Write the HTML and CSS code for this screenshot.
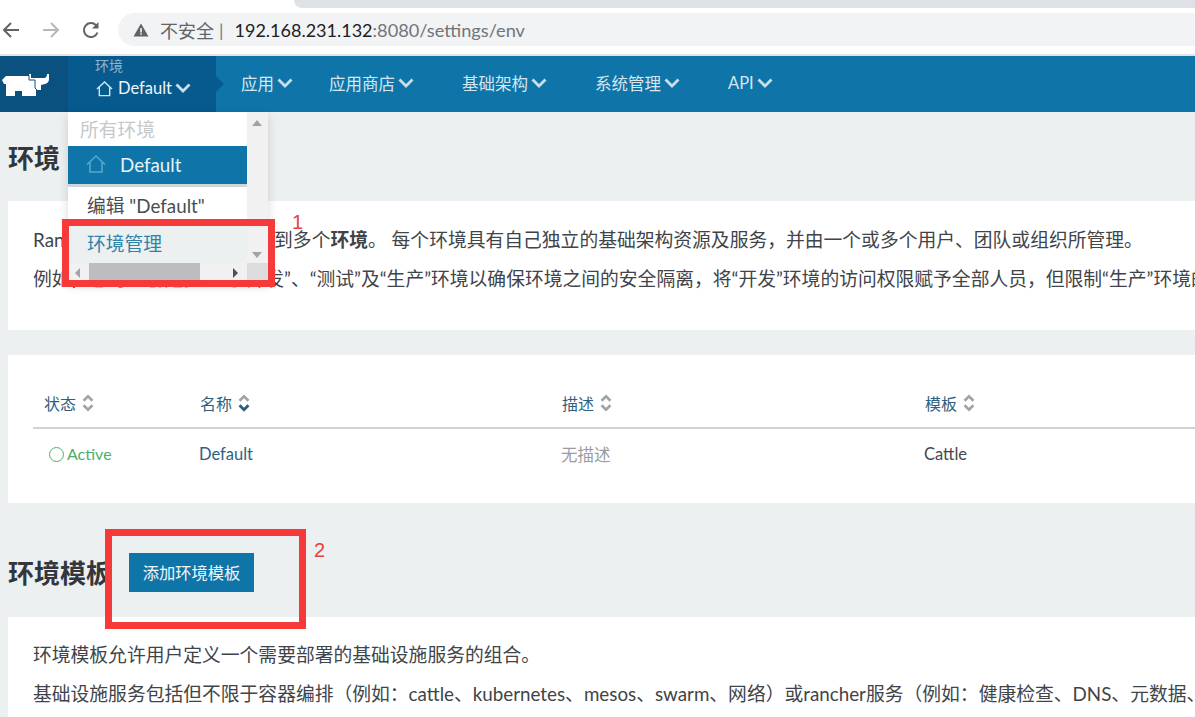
FILE: index.html
```html
<!DOCTYPE html>
<html lang="zh">
<head>
    <meta charset="utf-8">
    <title>环境</title>
    <link rel="stylesheet" href="styles.css">
</head>
<body>
    <!-- browser chrome -->
    <div class="tabstrip"><div class="tabrest"></div></div>
    <div class="toolbar">
        <svg class="tool" viewBox="0 0 20 20"><path d="M18 10H3M10 3l-7 7 7 7" fill="none" stroke="#5f6368" stroke-width="2"/></svg>
        <svg class="tool forward" viewBox="0 0 20 20"><path d="M2 10h15M10 3l7 7-7 7" fill="none" stroke="#b5b8bc" stroke-width="2"/></svg>
        <svg class="tool reload" viewBox="0 0 20 20"><path d="M16.5 12.5A7 7 0 1 1 15 5.2" fill="none" stroke="#5f6368" stroke-width="2"/><path d="M17.5 2v6.5H11z" fill="#5f6368"/></svg>
        <div class="omnibox">
            <svg class="warn" viewBox="0 0 16 16"><path d="M8 1.500 15.500 14.500H.5z" fill="#5f6368"/><path d="M7.200 6h1.600v4.500H7.200zM7.200 11.300h1.600v1.500H7.200z" fill="#f1f3f4"/></svg>
            <span class="insecure">不安全</span><span class="bar">|</span>
            <span class="host">192.168.231.132</span><span class="path">:8080/settings/env</span>
        </div>
    </div>

    <!-- app nav -->
    <div class="nav">
        <div class="logo">
            <svg viewBox="0 0 60 36" width="60" height="36"><path d="M2 14 6 10H29V8H31V12H44Q47 12 47 8H49V13Q49 17 45 18L41 19V24H36V30H22V25H15V30H6V18H4Z" fill="#fff"/><path d="M29 9V14H35V22L37 24" fill="none" stroke="#0a5180" stroke-width="1"/></svg>
        </div>
        <div class="envtab">
            <div class="envlabel">环境</div>
            <div class="envname">
                <svg class="house" viewBox="0 0 18 18"><path d="M1 9.500 9 2l8 7.500M3.500 7.500V16.500h11V7.500" fill="none" stroke="#cfe6f3" stroke-width="1.500"/></svg>
                Default
                <svg class="chev" viewBox="0 0 16 10"><path d="M1.500 1.500 8 8l6.500-6.500" fill="none" stroke="#c9dfec" stroke-width="2.800"/></svg>
            </div>
            <div class="envarrow"></div>
        </div>
        <div class="navitem first">应用<svg class="chev" viewBox="0 0 16 10"><path d="M1.500 1.500 8 8l6.500-6.500" fill="none" stroke="#c9dfec" stroke-width="2.800"/></svg></div>
        <div class="navitem second">应用商店<svg class="chev" viewBox="0 0 16 10"><path d="M1.500 1.500 8 8l6.500-6.500" fill="none" stroke="#c9dfec" stroke-width="2.800"/></svg></div>
        <div class="navitem">基础架构<svg class="chev" viewBox="0 0 16 10"><path d="M1.500 1.500 8 8l6.500-6.500" fill="none" stroke="#c9dfec" stroke-width="2.800"/></svg></div>
        <div class="navitem">系统管理<svg class="chev" viewBox="0 0 16 10"><path d="M1.500 1.500 8 8l6.500-6.500" fill="none" stroke="#c9dfec" stroke-width="2.800"/></svg></div>
        <div class="navitem">API<svg class="chev" viewBox="0 0 16 10"><path d="M1.500 1.500 8 8l6.500-6.500" fill="none" stroke="#c9dfec" stroke-width="2.800"/></svg></div>
    </div>

    <div class="content">
        <h2 class="title">环境</h2>
        <div class="card intro">
            <p>Rancher 支持将资源分组归属到多个<b>环境</b>。 每个环境具有自己独立的基础架构资源及服务，并由一个或多个用户、团队或组织所管理。</p>
            <p>例如，您可以创建独立的“开发”、“测试”及“生产”环境以确保环境之间的安全隔离，将“开发”环境的访问权限赋予全部人员，但限制“生产”环境的访问权限。</p>
        </div>

        <div class="card tablecard">
            <div class="row head">
                <div>状态<svg class="sort" viewBox="0 0 12 18"><path d="M2 7l4-4 4 4M2 11l4 4 4-4" fill="none" stroke="#a0a4a8" stroke-width="2.400"/></svg></div>
                <div>名称<svg class="sort" viewBox="0 0 12 18"><path d="M2 7l4-4 4 4" fill="none" stroke="#a0a4a8" stroke-width="2.400"/><path d="M2 11l4 4 4-4" fill="none" stroke="#2f5f80" stroke-width="2.600"/></svg></div>
                <div>描述<svg class="sort" viewBox="0 0 12 18"><path d="M2 7l4-4 4 4M2 11l4 4 4-4" fill="none" stroke="#a0a4a8" stroke-width="2.400"/></svg></div>
                <div>模板<svg class="sort" viewBox="0 0 12 18"><path d="M2 7l4-4 4 4M2 11l4 4 4-4" fill="none" stroke="#a0a4a8" stroke-width="2.400"/></svg></div>
            </div>
            <div class="row body">
                <div class="active"><span class="dot"></span>Active</div>
                <div class="envlink">Default</div>
                <div class="muted">无描述</div>
                <div class="plain">Cattle</div>
            </div>
        </div>

        <div class="titlerow">
            <h2 class="title">环境模板</h2>
            <button class="addbtn">添加环境模板</button>
        </div>
        <div class="card templates">
            <p>环境模板允许用户定义一个需要部署的基础设施服务的组合。</p>
            <p>基础设施服务包括但不限于容器编排（例如：cattle、kubernetes、mesos、swarm、网络）或rancher服务（例如：健康检查、DNS、元数据、调度、服务发现及存储）。</p>
        </div>
    </div>

    <!-- dropdown over the page -->
    <div class="menu">
        <div class="menulist">
            <div class="menuhead">所有环境</div>
            <div class="menucur">
                <svg class="curhouse" viewBox="0 0 20 20"><path d="M1 10.500 10 2l9 8.500M4 8v10h12V8" fill="none" stroke="#5ba6cf" stroke-width="1.600"/></svg>
                Default
            </div>
            <div class="menuitem">编辑 "Default"</div>
            <div class="menuitem manage">环境管理</div>
        </div>
        <div class="vscroll">
            <span class="up"></span>
            <span class="down"></span>
        </div>
        <div class="hscroll">
            <span class="left"></span>
            <span class="hthumb"></span>
            <span class="right"></span>
        </div>
        <div class="corner"></div>
    </div>

    <div class="redbox box1"></div>
    <div class="mark mark1">1</div>
    <div class="redbox box2"></div>
    <div class="mark mark2">2</div>
</body>
</html>
```

FILE: styles.css
```css
html, body {
    margin: 0;
    height: 717px;
    overflow: hidden;
}

body {
    position: relative;
    background-color: #ecf0f1;
    font-family: Lato, "Noto Sans CJK SC", sans-serif;
    color: #3d4145;
}

/* browser chrome */
.tabstrip {
    height: 9px;
    background-color: #fff;
}

.tabrest {
    height: 8px;
    margin-left: 294px;
    background-color: #dee1e6;
    border-bottom-left-radius: 8px;
}

.toolbar {
    display: flex;
    align-items: center;
    height: 47px;
    padding-bottom: 4px;
    box-sizing: border-box;
    background-color: #fff;
    border-bottom: 2px solid #e2e3e4;
}

.tool {
    width: 20px;
    height: 20px;
    flex: none;
    margin-left: 1px;
}

.forward {
    margin-left: 20px;
}

.reload {
    margin-left: 20px;
}

.omnibox {
    display: flex;
    align-items: center;
    flex: 1;
    height: 33px;
    margin-left: 17px;
    padding-left: 15px;
    background-color: #f1f3f4;
    border-radius: 17px 0 0 17px;
    font-size: 18px;
    white-space: nowrap;
}

.warn {
    width: 16px;
    height: 16px;
    margin-right: 11px;
}

.insecure {
    color: #5f6368;
}

.bar {
    color: #777;
    margin: 0 11px 0 5px;
}

.host {
    color: #202124;
}

.path {
    color: #70757a;
    font-size: 18.200px;
}

/* nav */
.nav {
    display: flex;
    height: 56px;
    background-color: #0f75a8;
    color: #d5e6f0;
    font-size: 16.500px;
}

.logo {
    display: flex;
    align-items: center;
    width: 68px;
    flex: none;
    background-color: #0a5180;
}

.envtab {
    position: relative;
    width: 148px;
    flex: none;
    padding: 1px 0 0 27px;
    box-sizing: border-box;
    background-color: #075a8e;
}

.envlabel {
    font-size: 14px;
    line-height: 18px;
    color: #8fb3cb;
}

.envname {
    display: flex;
    align-items: center;
    margin-top: 2px;
    font-size: 16.500px;
    line-height: 22px;
    color: #eef5f9;
}

.envarrow {
    position: absolute;
    right: -8px;
    top: 20px;
    border-left: 8px solid #075a8e;
    border-top: 8px solid transparent;
    border-bottom: 8px solid transparent;
}

.house {
    width: 17px;
    height: 17px;
    margin: 0 5px 0 1px;
}

.chev {
    width: 16px;
    height: 10px;
    margin-left: 3px;
}

.navitem {
    display: flex;
    align-items: center;
    margin-left: 48px;
    padding-bottom: 2px;
    white-space: nowrap;
}

.navitem.first {
    margin-left: 25px;
}

.navitem.second {
    margin-left: 36px;
}

/* page content */
.content {
    padding-left: 8px;
}

.title {
    margin: 0;
    font-size: 26px;
    line-height: 36px;
    font-weight: 700;
    color: #33373b;
}

.content > .title {
    padding-top: 28px;
    height: 61px;
}

.card {
    background-color: #fff;
    font-size: 18.800px;
    white-space: nowrap;
    overflow: hidden;
}

.card p {
    margin: 0 0 12px;
    line-height: 27px;
    color: #404448;
}

.intro {
    height: 129px;
    padding: 25px 0 0 25px;
    box-sizing: border-box;
}

.tablecard {
    height: 148px;
    margin-top: 25px;
    padding: 31px 0 0 25px;
    box-sizing: border-box;
}

.row {
    display: grid;
    grid-template-columns: 156px 362px 363px 1fr;
    align-items: center;
}

.head {
    height: 43px;
    padding-bottom: 7px;
    box-sizing: border-box;
    border-bottom: 2px solid #d0d2d4;
    color: #2f5f80;
    font-size: 16px;
}

.head > div {
    display: flex;
    align-items: center;
    padding-left: 11px;
}

.sort {
    width: 14px;
    height: 20px;
    margin-left: 5px;
}

.body {
    height: 50px;
    font-size: 16.500px;
}

.body > div {
    padding-left: 10px;
}

.body .active {
    display: flex;
    align-items: center;
    padding-left: 16px;
    color: #4dae6c;
    font-size: 16px;
    padding-bottom: 2px;
}

.dot {
    width: 13px;
    height: 13px;
    margin-right: 3px;
    margin-top: 3px;
    border: 1px solid #4dae6c;
    border-radius: 50%;
}

.envlink {
    color: #2f6184;
}

.muted {
    color: #9a9da0;
}

.plain {
    color: #45494d;
}

.titlerow {
    display: flex;
    align-items: center;
    height: 114px;
    padding-top: 26px;
    box-sizing: border-box;
}

.addbtn {
    width: 125px;
    height: 39px;
    margin: 0 0 2px 17px;
    padding: 0;
    border: none;
    background-color: #0f75a8;
    color: #f2f7fa;
    font-family: inherit;
    font-size: 16.300px;
}

.templates {
    height: 100px;
    padding: 24px 0 0 25px;
    box-sizing: border-box;
}

/* dropdown */
.menu {
    position: absolute;
    left: 68px;
    top: 112px;
    width: 200px;
    height: 170px;
    display: grid;
    grid-template-columns: 179px 21px;
    grid-template-rows: 151px 19px;
    background-color: #fff;
    box-shadow: 0 4px 10px rgba(0, 0, 0, 0.15);
}

.menulist {
    overflow: hidden;
    white-space: nowrap;
    font-size: 18.800px;
}

.menuhead {
    height: 34px;
    line-height: 36px;
    padding-left: 12px;
    color: #c6c8ca;
}

.menucur {
    display: flex;
    align-items: center;
    height: 38px;
    padding: 0 0 2px 18px;
    box-sizing: content-box;
    height: 36px;
    background-color: #0f75a8;
    border-bottom: 3px solid #cfd6da;
    color: #e8f3f9;
}

.curhouse {
    width: 20px;
    height: 20px;
    margin-right: 14px;
}

.menuitem {
    height: 38px;
    line-height: 38px;
    padding-left: 19px;
    color: #494d51;
}

.manage {
    background-color: #ecf0f1;
    color: #2e83a8;
}

.vscroll {
    position: relative;
    background-color: #f1f1f1;
}

.up, .down {
    position: absolute;
    left: 5px;
    border-left: 5px solid transparent;
    border-right: 5px solid transparent;
}

.up {
    top: 8px;
    border-bottom: 6px solid #a3a3a3;
}

.down {
    bottom: 5px;
    border-top: 6px solid #a3a3a3;
}

.hscroll {
    display: flex;
    align-items: center;
    background-color: #f1f1f1;
}

.left {
    margin-left: 7px;
    border-right: 5px solid #a3a3a3;
    border-top: 5px solid transparent;
    border-bottom: 5px solid transparent;
}

.hthumb {
    width: 111px;
    height: 19px;
    margin-left: 9px;
    background-color: #bdbdbf;
}

.right {
    margin-left: 33px;
    border-left: 5px solid #505050;
    border-top: 5px solid transparent;
    border-bottom: 5px solid transparent;
}

.corner {
    background-color: #dcdcdc;
}

/* annotations */
.redbox {
    position: absolute;
    box-sizing: border-box;
    border: 7px solid #f63a3a;
}

.box1 {
    left: 62px;
    top: 219px;
    width: 213px;
    height: 68px;
}

.box2 {
    left: 105px;
    top: 529px;
    width: 201px;
    height: 100px;
}

.mark {
    position: absolute;
    font-family: "Liberation Sans", sans-serif;
    font-size: 20px;
    line-height: 24px;
    color: #e8413e;
}

.mark1 {
    left: 292px;
    top: 210px;
}

.mark2 {
    left: 314px;
    top: 538px;
}
```
